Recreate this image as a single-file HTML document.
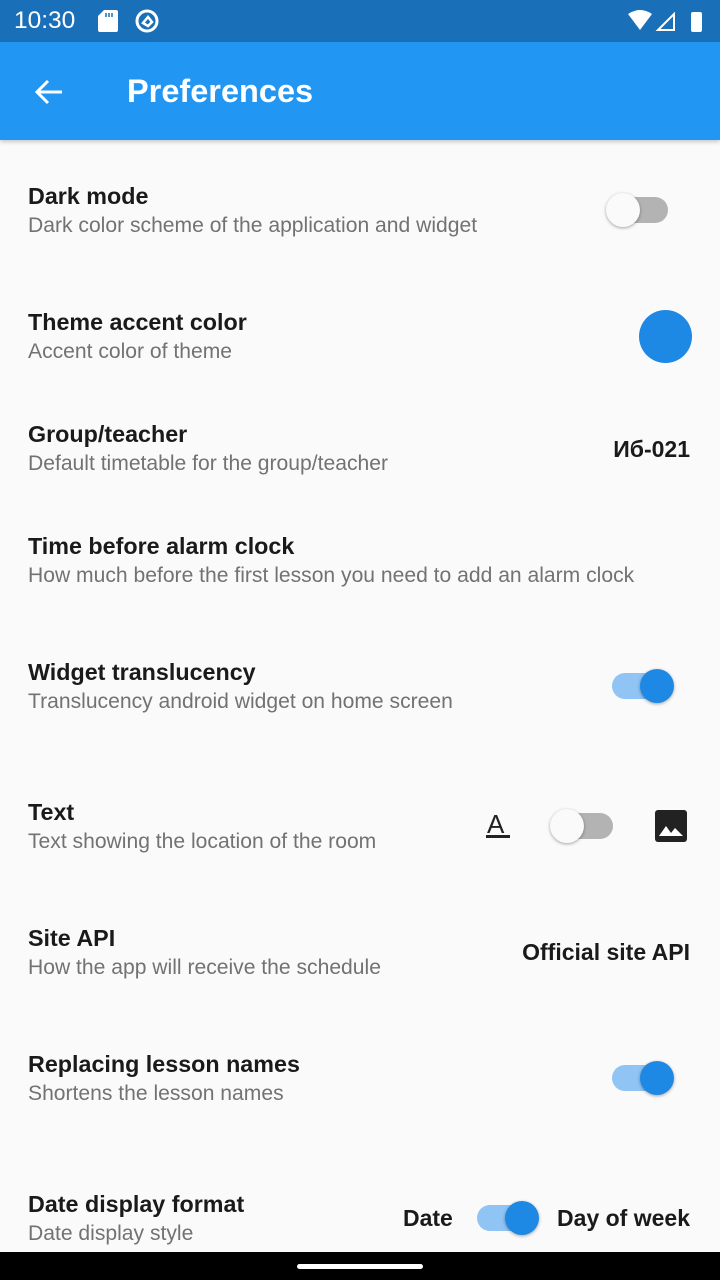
<!DOCTYPE html><html><head><meta charset="utf-8"><style>
*{margin:0;padding:0;box-sizing:border-box}
body{width:720px;height:1280px;background:#fafafa;font-family:"Liberation Sans",sans-serif;position:relative;overflow:hidden}
.a{position:absolute}
.t{position:absolute;left:28px;font-size:23.3px;font-weight:bold;color:#1a1a1a;margin-top:0px}
.s{position:absolute;left:28px;font-size:21.1px;color:#727272;margin-top:0px}
.v{position:absolute;right:30px;font-size:23px;font-weight:bold;color:#1a1a1a}
.tr{position:absolute;width:58px;height:26px;border-radius:13px}
.th{position:absolute;width:34px;height:34px;border-radius:50%;box-shadow:0 1px 3px rgba(0,0,0,.35)}
.off .tr{background:#b3b3b3}.off .th{background:#fafafa}
.on .tr{background:#8fc4f4}.on .th{background:#1e88e5}
</style></head><body>
<div class="a" style="left:0;top:0;width:720px;height:42px;background:#1a70b8"></div>
<div class="a" style="left:14px;top:7px;color:#fff;font-size:24.5px">10:30</div>
<svg class="a" style="left:98px;top:10px" width="20" height="22" viewBox="0 0 20 22"><path d="M6 0h12a2 2 0 0 1 2 2v18a2 2 0 0 1-2 2H2a2 2 0 0 1-2-2V6z" fill="#fff"/><path d="M8 3v4M11 3v4M14 3v4" stroke="#1a70b8" stroke-width="1.5"/></svg>
<svg class="a" style="left:134px;top:8px" width="26" height="26" viewBox="0 0 26 26"><circle cx="13" cy="13" r="10" fill="none" stroke="#fff" stroke-width="3"/><path d="M9 15l5-6 4 5-4 4z" fill="none" stroke="#fff" stroke-width="2.5"/></svg>
<svg class="a" style="left:628px;top:10px" width="80" height="24" viewBox="0 0 80 24"><path d="M0 4Q12-4 24 4L12 20z" fill="#fff"/><path d="M30 20L46 4V20z" fill="none" stroke="#fff" stroke-width="2"/><rect x="63" y="2" width="11" height="20" rx="2" fill="#fff"/></svg>
<div class="a" style="left:0;top:42px;width:720px;height:98px;background:#2196f3;box-shadow:0 2px 4px rgba(0,0,0,.2)"></div>
<svg class="a" style="left:34px;top:78px" width="30" height="28" viewBox="0 0 30 28"><path d="M28 14H4M14 3L3 14l11 11" fill="none" stroke="#fff" stroke-width="3"/></svg>
<div class="a" style="left:127px;top:73px;color:#fff;font-size:32.5px;font-weight:bold">Preferences</div>

<div class="t" style="top:183px">Dark mode</div><div class="s" style="top:214px">Dark color scheme of the application and widget</div>
<div class="off"><div class="tr" style="left:610px;top:197px"></div><div class="th" style="left:606px;top:193px"></div></div>

<div class="t" style="top:309px">Theme accent color</div><div class="s" style="top:340px">Accent color of theme</div>
<div class="a" style="left:639px;top:310px;width:53px;height:53px;border-radius:50%;background:#1e88e5"></div>

<div class="t" style="top:421px">Group/teacher</div><div class="s" style="top:452px">Default timetable for the group/teacher</div>
<div class="v" style="top:436px">Иб-021</div>

<div class="t" style="top:533px">Time before alarm clock</div><div class="s" style="top:564px">How much before the first lesson you need to add an alarm clock</div>

<div class="t" style="top:659px">Widget translucency</div><div class="s" style="top:690px">Translucency android widget on home screen</div>
<div class="on"><div class="tr" style="left:612px;top:673px"></div><div class="th" style="left:640px;top:669px"></div></div>

<div class="t" style="top:799px">Text</div><div class="s" style="top:830px">Text showing the location of the room</div>
<div class="a" style="left:487px;top:809px;font-size:26px;color:#222">A</div>
<div class="a" style="left:486px;top:835px;width:24px;height:3px;background:#222"></div>
<div class="off"><div class="tr" style="left:555px;top:813px"></div><div class="th" style="left:550px;top:809px"></div></div>
<svg class="a" style="left:655px;top:810px" width="32" height="32" viewBox="0 0 32 32"><rect width="32" height="32" rx="3" fill="#222"/><path d="M4 26l7-10 5 7 4-5 8 8z" fill="#fff"/></svg>

<div class="t" style="top:925px">Site API</div><div class="s" style="top:956px">How the app will receive the schedule</div>
<div class="v" style="top:939px">Official site API</div>

<div class="t" style="top:1051px">Replacing lesson names</div><div class="s" style="top:1082px">Shortens the lesson names</div>
<div class="on"><div class="tr" style="left:612px;top:1065px"></div><div class="th" style="left:640px;top:1061px"></div></div>

<div class="t" style="top:1191px">Date display format</div><div class="s" style="top:1222px">Date display style</div>
<div class="a" style="left:403px;top:1205px;font-size:23px;font-weight:bold;color:#1a1a1a">Date</div>
<div class="on"><div class="tr" style="left:477px;top:1205px"></div><div class="th" style="left:505px;top:1201px"></div></div>
<div class="v" style="top:1205px">Day of week</div>

<div class="a" style="left:0;top:1252px;width:720px;height:28px;background:#000"></div>
<div class="a" style="left:297px;top:1264px;width:126px;height:5px;border-radius:3px;background:#fff"></div>
</body></html>
